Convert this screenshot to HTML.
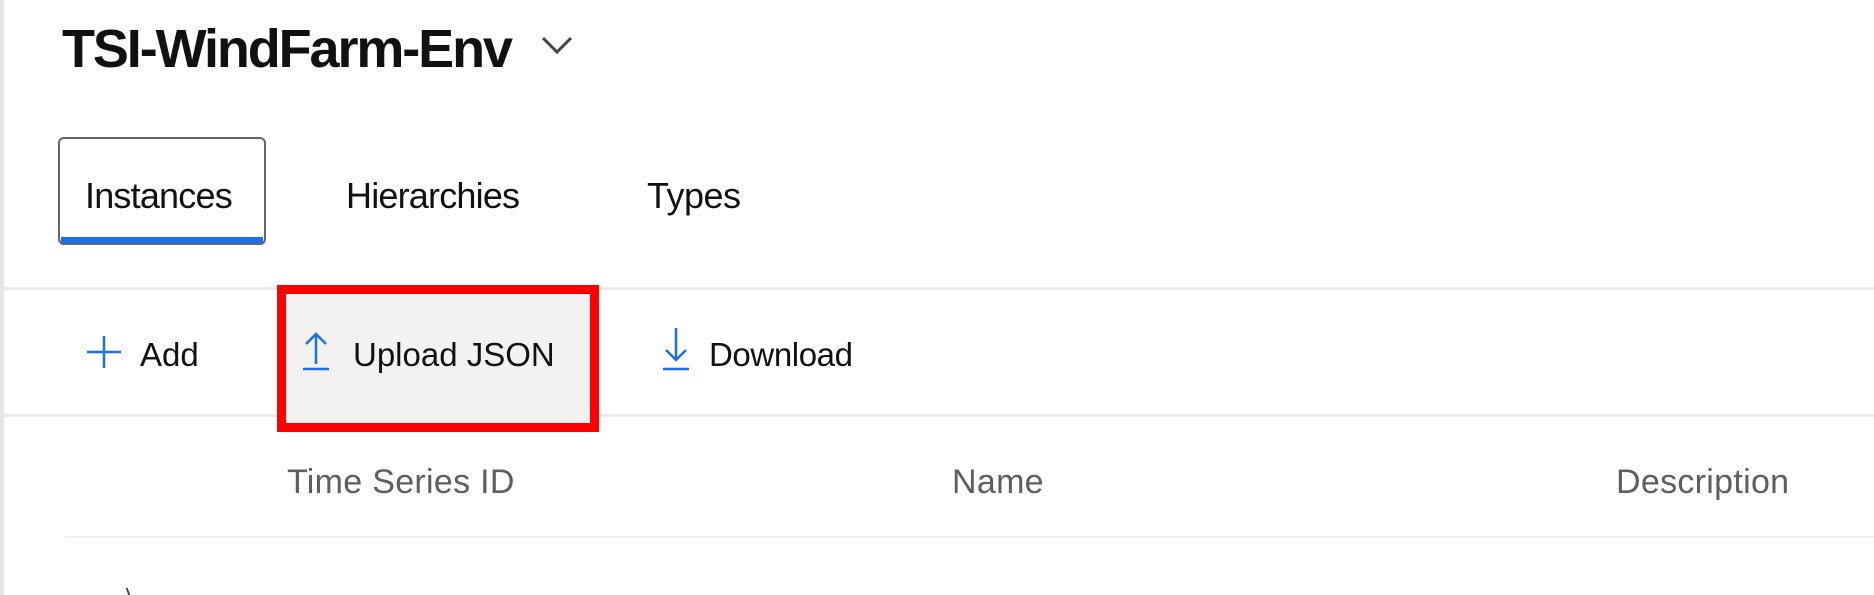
<!DOCTYPE html>
<html><head><meta charset="utf-8"><style>
html,body{margin:0;padding:0;width:1874px;height:595px;overflow:hidden;background:#fff;font-family:"Liberation Sans",sans-serif;color:#111;}
#wrap{position:relative;width:1874px;height:595px;overflow:hidden;}
.abs{position:absolute;white-space:nowrap;}
</style></head><body><div id="wrap">
<div class="abs" style="left:0;top:0;width:4px;height:595px;background:#e6e6e6"></div>
<div class="abs" style="left:62px;top:16px;font-size:54px;font-weight:bold;letter-spacing:-2.1px;line-height:66px">TSI-WindFarm-Env</div>
<svg class="abs" style="left:540px;top:34px" width="34" height="22" viewBox="0 0 34 22"><path d="M3 4 L17 18 L31 4" fill="none" stroke="#444" stroke-width="3"/></svg>
<div class="abs" style="left:58px;top:137px;width:208px;height:108px;border:2px solid #666;border-radius:6px;box-sizing:border-box"></div>
<div class="abs" style="left:61px;top:237px;width:202px;height:6px;background:#1a6ff0"></div>
<div class="abs" style="left:85px;top:174px;font-size:36px;letter-spacing:-0.8px;line-height:44px">Instances</div>
<div class="abs" style="left:346px;top:174px;font-size:36px;letter-spacing:-0.8px;line-height:44px">Hierarchies</div>
<div class="abs" style="left:647px;top:174px;font-size:36px;letter-spacing:-0.5px;line-height:44px">Types</div>
<div class="abs" style="left:4px;top:287px;width:1870px;height:3px;background:#ebebeb"></div>
<div class="abs" style="left:4px;top:414px;width:1870px;height:3px;background:#ebebeb"></div>
<div class="abs" style="left:286px;top:294px;width:304px;height:129px;background:#f3f2f1"></div>
<div class="abs" style="left:277px;top:285px;width:322px;height:147px;border:9px solid #ff0000;box-sizing:border-box"></div>
<svg class="abs" style="left:86px;top:335px" width="36" height="34" viewBox="0 0 36 34"><path d="M18 1 V33 M1 17 H35" stroke="#1a6ff0" stroke-width="2.5"/></svg>
<div class="abs" style="left:140px;top:335px;font-size:33px;letter-spacing:0px;line-height:40px">Add</div>
<svg class="abs" style="left:302px;top:331px" width="28" height="40" viewBox="0 0 28 40"><path d="M14 3 V33 M4 13 L14 3 L24 13 M1 38 H27" fill="none" stroke="#1a6ff0" stroke-width="2.5"/></svg>
<div class="abs" style="left:353px;top:335px;font-size:33px;letter-spacing:0px;line-height:40px">Upload JSON</div>
<svg class="abs" style="left:661px;top:327px" width="30" height="44" viewBox="0 0 30 44"><path d="M15 1 V33 M5 23 L15 33 L25 23 M2 42 H28" fill="none" stroke="#1a6ff0" stroke-width="2.5"/></svg>
<div class="abs" style="left:709px;top:335px;font-size:33px;letter-spacing:-0.4px;line-height:40px">Download</div>
<div class="abs" style="left:287px;top:462px;font-size:34px;letter-spacing:0.3px;line-height:40px;color:#605e5c">Time Series ID</div>
<div class="abs" style="left:952px;top:462px;font-size:34px;letter-spacing:0.3px;line-height:40px;color:#605e5c">Name</div>
<div class="abs" style="left:1616px;top:462px;font-size:34px;letter-spacing:0.3px;line-height:40px;color:#605e5c">Description</div>
<div class="abs" style="left:65px;top:536px;width:1809px;height:2px;background:#efefef"></div>
<div class="abs" style="left:127px;top:588px;width:2px;height:7px;background:#444;transform:skewX(20deg)"></div>
</div></body></html>
